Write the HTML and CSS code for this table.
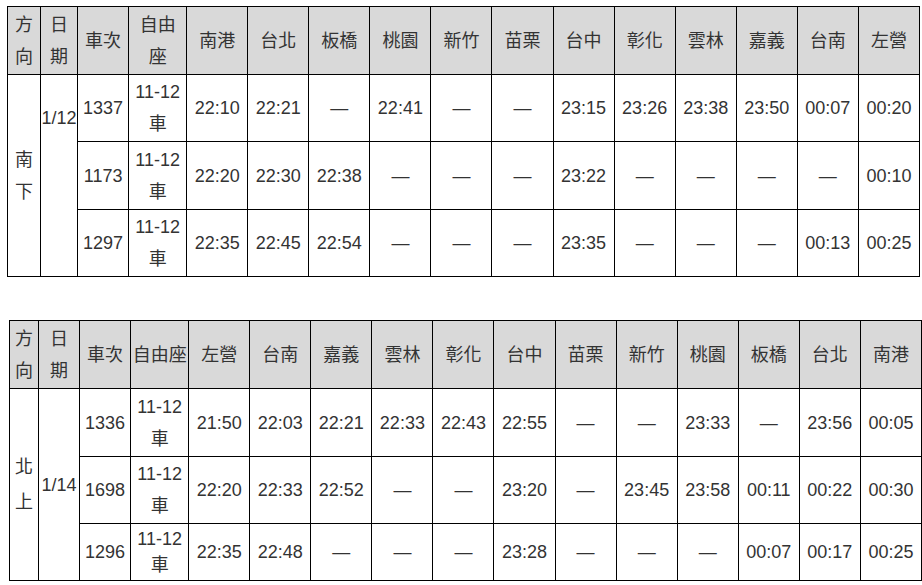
FILE: index.html
```html
<!DOCTYPE html>
<html lang="zh-Hant">
<head>
<meta charset="utf-8">
<title>自由座時刻表</title>
<link rel="stylesheet" href="styles.css">
</head>
<body>
<div class="page">
  <table class="tt tt-south">
    <colgroup>
      <col class="c-dir"><col class="c-date"><col class="c-no"><col class="c-seat">
      <col class="c-st"><col class="c-st"><col class="c-st"><col class="c-st"><col class="c-st"><col class="c-st">
      <col class="c-st"><col class="c-st"><col class="c-st"><col class="c-st"><col class="c-st"><col class="c-st">
    </colgroup>
    <tr class="head">
      <th>方<br>向</th><th>日<br>期</th><th>車次</th><th>自由<br>座</th>
      <th>南港</th><th>台北</th><th>板橋</th><th>桃園</th><th>新竹</th><th>苗栗</th>
      <th>台中</th><th>彰化</th><th>雲林</th><th>嘉義</th><th>台南</th><th>左營</th>
    </tr>
    <tr class="r67">
      <td rowspan="3" class="dir">南<br>下</td>
      <td rowspan="3" class="date top">1/12</td>
      <td>1337</td><td>11-12<br>車</td>
      <td>22:10</td><td>22:21</td><td>—</td><td>22:41</td><td>—</td><td>—</td>
      <td>23:15</td><td>23:26</td><td>23:38</td><td>23:50</td><td>00:07</td><td>00:20</td>
    </tr>
    <tr class="r68">
      <td>1173</td><td>11-12<br>車</td>
      <td>22:20</td><td>22:30</td><td>22:38</td><td>—</td><td>—</td><td>—</td>
      <td>23:22</td><td>—</td><td>—</td><td>—</td><td>—</td><td>00:10</td>
    </tr>
    <tr class="r67">
      <td>1297</td><td>11-12<br>車</td>
      <td>22:35</td><td>22:45</td><td>22:54</td><td>—</td><td>—</td><td>—</td>
      <td>23:35</td><td>—</td><td>—</td><td>—</td><td>00:13</td><td>00:25</td>
    </tr>
  </table>

  <table class="tt tt-north">
    <colgroup>
      <col class="c-dir2"><col class="c-date2"><col class="c-no"><col class="c-seat">
      <col class="c-st"><col class="c-st"><col class="c-st"><col class="c-st"><col class="c-st"><col class="c-st">
      <col class="c-st"><col class="c-st"><col class="c-st"><col class="c-st"><col class="c-st"><col class="c-st">
    </colgroup>
    <tr class="head">
      <th>方<br>向</th><th>日<br>期</th><th>車次</th><th>自由座</th>
      <th>左營</th><th>台南</th><th>嘉義</th><th>雲林</th><th>彰化</th><th>台中</th>
      <th>苗栗</th><th>新竹</th><th>桃園</th><th>板橋</th><th>台北</th><th>南港</th>
    </tr>
    <tr class="r68">
      <td rowspan="3" class="dir">北<br>上</td>
      <td rowspan="3" class="date">1/14</td>
      <td>1336</td><td>11-12<br>車</td>
      <td>21:50</td><td>22:03</td><td>22:21</td><td>22:33</td><td>22:43</td><td>22:55</td>
      <td>—</td><td>—</td><td>23:33</td><td>—</td><td>23:56</td><td>00:05</td>
    </tr>
    <tr class="r67">
      <td>1698</td><td>11-12<br>車</td>
      <td>22:20</td><td>22:33</td><td>22:52</td><td>—</td><td>—</td><td>23:20</td>
      <td>—</td><td>23:45</td><td>23:58</td><td>00:11</td><td>00:22</td><td>00:30</td>
    </tr>
    <tr class="r57">
      <td>1296</td><td>11-12<br>車</td>
      <td>22:35</td><td>22:48</td><td>—</td><td>—</td><td>—</td><td>23:28</td>
      <td>—</td><td>—</td><td>—</td><td>00:07</td><td>00:17</td><td>00:25</td>
    </tr>
  </table>
</div>
</body>
</html>
```

FILE: styles.css
```css
html, body {
  margin: 0;
  padding: 0;
  background: #ffffff;
}

.page {
  padding: 6px 0 0 7px;
  font-family: "Liberation Sans", "Noto Sans CJK TC", Arial, sans-serif;
  font-size: 18px;
  color: #333333;
}

.tt {
  border-collapse: collapse;
  table-layout: fixed;
  width: 913px;
}

.tt-north {
  margin-top: 43px;
  margin-left: 2px;
}

.tt th,
.tt td {
  border: 1px solid #000000;
  padding: 0;
  text-align: center;
  vertical-align: middle;
  line-height: 32px;
  font-weight: normal;
  white-space: nowrap;
  overflow: hidden;
}

.tt th {
  background: #d9d9d9;
}

.c-dir { width: 33px; }
.c-date { width: 37px; }
.c-dir2 { width: 29px; }
.c-date2 { width: 41px; }
.c-no { width: 51px; }
.c-seat { width: 58px; }
.c-st { width: 61px; }

.head { height: 68px; }
.r68 { height: 68px; }
.r67 { height: 67px; }
.r57 { height: 57px; }
.r57 td { line-height: 26px; }
.r57 td.dir,
.r57 td.date { line-height: 35px; }

.tt-north .dir { line-height: 35px; }

.tt td.top {
  vertical-align: top;
  padding-top: 27px;
}
```
